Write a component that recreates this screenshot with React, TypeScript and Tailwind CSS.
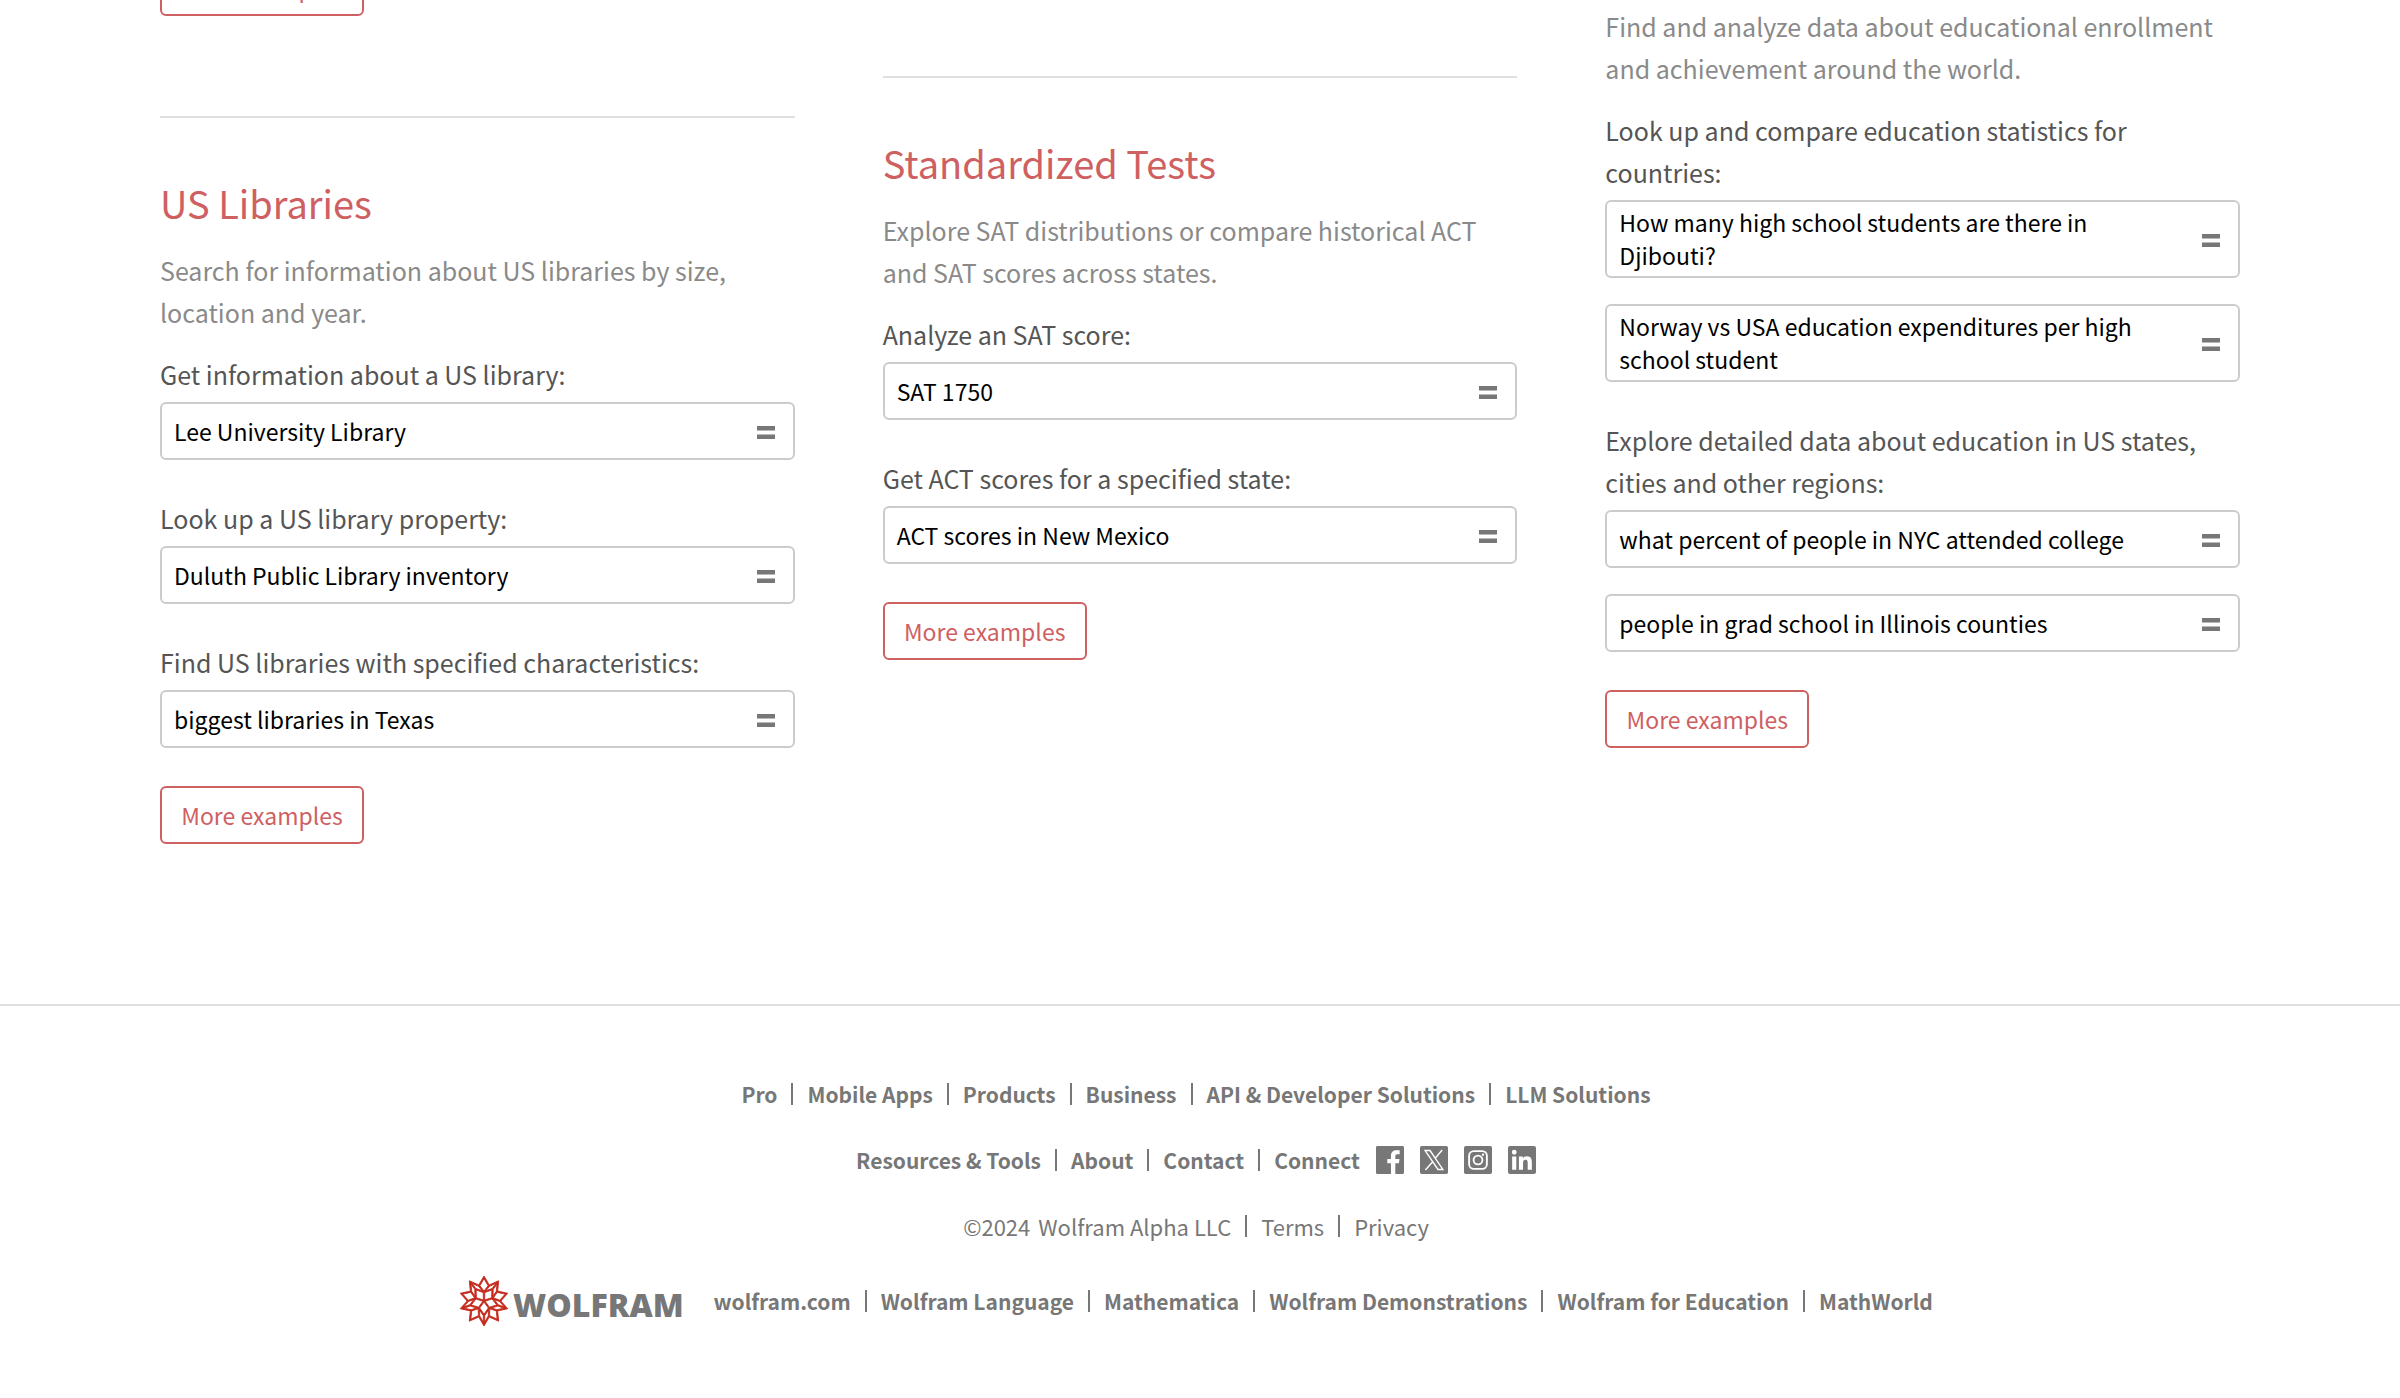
import { Fragment, type ReactNode } from "react";
import { SiWolfram } from "react-icons/si";

type Group = { label: string; examples: string[] };

function Example({ text }: { text: string }) {
  return (
    <a
      href="#"
      className="flex min-h-[58px] items-center justify-between gap-6 rounded-md border-2 border-[#cccccc] py-1 pr-[18px] pl-3 text-[23px] leading-[33px] text-black"
    >
      <span>{text}</span>
      <svg viewBox="0 0 18 18" className="size-[18px] shrink-0" fill="#777777" aria-hidden="true">
        <rect x="0" y="4" width="18" height="4.5" />
        <rect x="0" y="12.5" width="18" height="4.5" />
      </svg>
    </a>
  );
}

function MoreLink() {
  return (
    <a
      href="#"
      className="flex h-[58px] min-w-[204px] items-center justify-center self-start rounded-md border-2 border-[#cf6062] px-4 text-[23px] leading-[33px] text-[#cf6062]"
    >
      More examples
    </a>
  );
}

function Topic({ title, intro, groups }: { title?: string; intro: string; groups: Group[] }) {
  return (
    <section className="flex flex-col">
      {title && <h2 className="mb-[18px] text-[38px] leading-[56px] text-[#cf6062]">{title}</h2>}
      <p className="mb-5 text-[25px] leading-[42px] text-[#8a8a8a]">{intro}</p>
      <div className="mb-[38px] flex flex-col gap-[37px]">
        {groups.map((g) => (
          <div key={g.label}>
            <p className="mb-[7px] text-[25px] leading-[42px] text-[#555555]">{g.label}</p>
            <div className="flex flex-col gap-[26px]">
              {g.examples.map((e) => (
                <Example key={e} text={e} />
              ))}
            </div>
          </div>
        ))}
      </div>
      <MoreLink />
    </section>
  );
}

const libraries: Group[] = [
  { label: "Get information about a US library:", examples: ["Lee University Library"] },
  { label: "Look up a US library property:", examples: ["Duluth Public Library inventory"] },
  { label: "Find US libraries with specified characteristics:", examples: ["biggest libraries in Texas"] },
];

const tests: Group[] = [
  { label: "Analyze an SAT score:", examples: ["SAT 1750"] },
  { label: "Get ACT scores for a specified state:", examples: ["ACT scores in New Mexico"] },
];

const statistics: Group[] = [
  {
    label: "Look up and compare education statistics for countries:",
    examples: [
      "How many high school students are there in Djibouti?",
      "Norway vs USA education expenditures per high school student",
    ],
  },
  {
    label: "Explore detailed data about education in US states, cities and other regions:",
    examples: ["what percent of people in NYC attended college", "people in grad school in Illinois counties"],
  },
];

function Links({ items }: { items: string[] }) {
  return (
    <>
      {items.map((item, i) => (
        <Fragment key={item}>
          {i > 0 && <span className="h-[22px] w-[2px] bg-[#777777]" />}
          <a href="#">{item}</a>
        </Fragment>
      ))}
    </>
  );
}

function Social({ label, children }: { label: string; children: ReactNode }) {
  return (
    <a href="#" aria-label={label}>
      <svg viewBox="0 0 24 24" className="size-7" fill="#777777" aria-hidden="true">
        {children}
      </svg>
    </a>
  );
}

export default function App() {
  return (
    <div className="min-h-screen overflow-hidden bg-white font-['Noto_Sans_CJK_SC',sans-serif]">
      <main className="grid grid-cols-3 items-start gap-[88px] px-40">
        <div className="-mt-[42px] flex flex-col">
          <MoreLink />
          <hr className="mt-[100px] mb-[57px] border-t-2 border-[#dfdfdf]" />
          <Topic
            title="US Libraries"
            intro="Search for information about US libraries by size, location and year."
            groups={libraries}
          />
        </div>
        <div className="flex flex-col pt-[76px]">
          <hr className="mb-[57px] border-t-2 border-[#dfdfdf]" />
          <Topic
            title="Standardized Tests"
            intro="Explore SAT distributions or compare historical ACT and SAT scores across states."
            groups={tests}
          />
        </div>
        <div className="flex flex-col pt-[5px]">
          <Topic
            intro="Find and analyze data about educational enrollment and achievement around the world."
            groups={statistics}
          />
        </div>
      </main>

      <footer className="mt-40 flex flex-col items-center border-t-2 border-[#dfdfdf] pt-[74px] pr-2 pb-16 text-[21px] leading-7 font-bold text-[#777777]">
        <nav className="flex items-center gap-[14px]" aria-label="Products">
          <Links
            items={["Pro", "Mobile Apps", "Products", "Business", "API & Developer Solutions", "LLM Solutions"]}
          />
        </nav>
        <nav className="mt-[38px] flex items-center gap-4" aria-label="Resources">
          <div className="flex items-center gap-[14px]">
            <Links items={["Resources & Tools", "About", "Contact", "Connect"]} />
          </div>
          <div className="flex gap-4">
            <Social label="Facebook">
              <path d="M22.676 0H1.324C.593 0 0 .593 0 1.324v21.352C0 23.408.593 24 1.324 24h11.494v-9.294H9.689v-3.621h3.129V8.41c0-3.099 1.894-4.785 4.659-4.785 1.325 0 2.464.097 2.796.141v3.24h-1.921c-1.5 0-1.792.721-1.792 1.771v2.311h3.584l-.465 3.63H16.56V24h6.115c.733 0 1.325-.592 1.325-1.324V1.324C24 .593 23.408 0 22.676 0" />
            </Social>
            <Social label="X">
              <rect width="24" height="24" rx="1.5" />
              <path
                d="M4.4 3.9h4.2l11 16.2h-4.2zM19 3.4l-6.3 7.5M11.3 13L4.6 20.6"
                fill="none"
                stroke="#ffffff"
                strokeWidth="1.2"
              />
            </Social>
            <Social label="Instagram">
              <rect width="24" height="24" rx="1.5" />
              <g fill="none" stroke="#ffffff" strokeWidth="1.6">
                <rect x="4.4" y="4.4" width="15.2" height="15.2" rx="4" />
                <circle cx="12" cy="12" r="3.8" />
              </g>
              <circle cx="16.3" cy="7.5" r="1" fill="#ffffff" />
            </Social>
            <Social label="LinkedIn">
              <path d="M20.447 20.452h-3.554v-5.569c0-1.328-.027-3.037-1.852-3.037-1.853 0-2.136 1.445-2.136 2.939v5.667H9.351V9h3.414v1.561h.046c.477-.9 1.637-1.85 3.37-1.85 3.601 0 4.267 2.37 4.267 5.455v6.286zM5.337 7.433a2.062 2.062 0 0 1-2.063-2.065 2.064 2.064 0 1 1 2.063 2.065zm1.782 13.019H3.555V9h3.564v11.452zM22.225 0H1.771C.792 0 0 .774 0 1.729v20.542C0 23.227.792 24 1.771 24h20.451C23.2 24 24 23.227 24 22.271V1.729C24 .774 23.2 0 22.222 0h.003z" />
            </Social>
          </div>
        </nav>
        <div className="mt-[38px] flex items-center gap-[14px] text-[22px] font-normal">
          <span className="flex gap-2">
            <span>©2024</span>
            <a href="#">Wolfram Alpha LLC</a>
          </span>
          <span className="h-[22px] w-[2px] bg-[#777777]" />
          <Links items={["Terms", "Privacy"]} />
        </div>
        <nav className="mt-9 flex h-[50px] items-center gap-[30px]" aria-label="Wolfram sites">
          <a href="#" className="flex items-center gap-1 font-['Open_Sans',sans-serif] text-[32px] font-extrabold">
            <SiWolfram className="size-[50px] stroke-[#c4281b] stroke-[0.4] text-[#c4281b]" aria-hidden="true" />
            <span className="pt-[7px]">WOLFRAM</span>
          </a>
          <div className="flex items-center gap-[14px]">
            <Links
              items={[
                "wolfram.com",
                "Wolfram Language",
                "Mathematica",
                "Wolfram Demonstrations",
                "Wolfram for Education",
                "MathWorld",
              ]}
            />
          </div>
        </nav>
      </footer>
    </div>
  );
}
